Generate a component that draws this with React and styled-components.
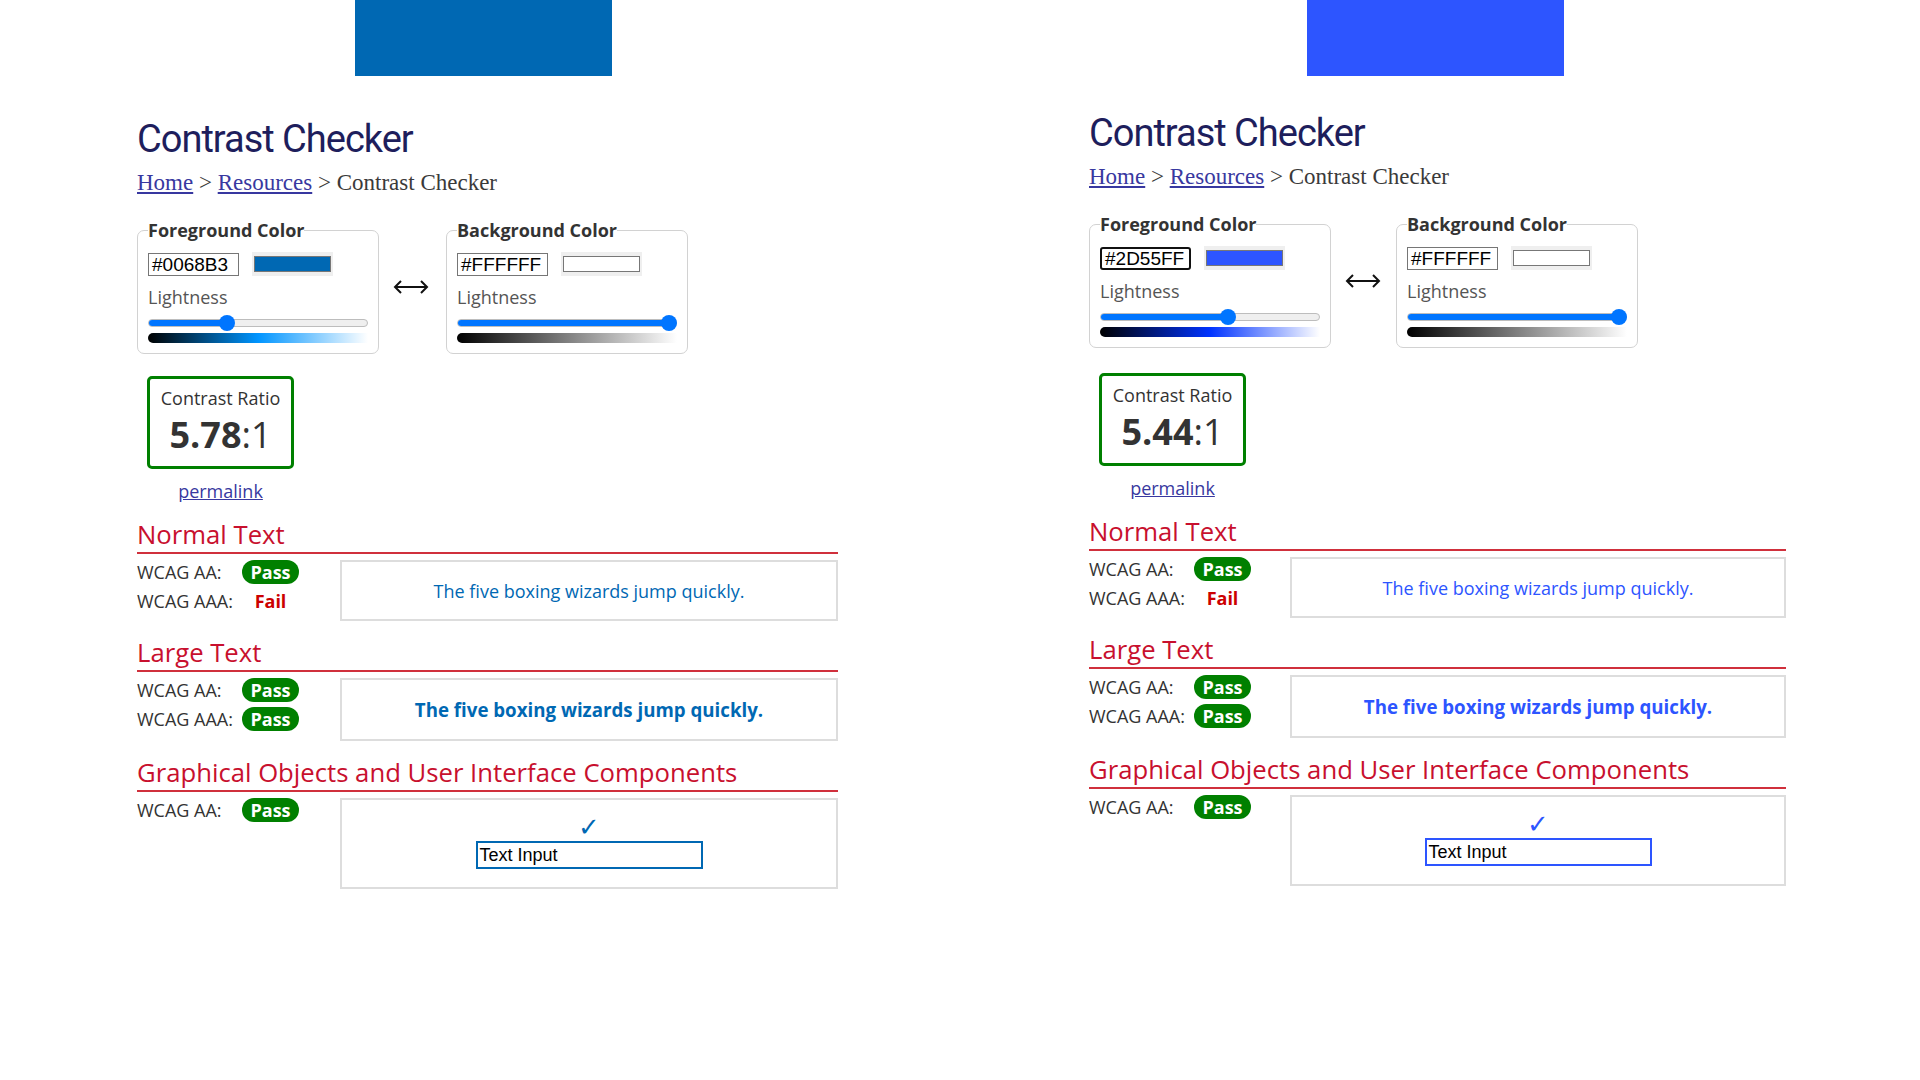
import React from 'react';
import styled, { createGlobalStyle } from 'styled-components';

const GlobalStyle = createGlobalStyle`
  body {
    margin: 0;
    background: #ffffff;
    font-family: "Open Sans", "Liberation Sans", sans-serif;
    color: #333333;
  }
`;

const Page = styled.div`
  display: flex;
  width: 1920px;
  height: 1080px;
  overflow: hidden;
  background: #ffffff;
`;

const Panel = styled.div`
  width: 952px;
  padding-left: 137px;
  box-sizing: border-box;
  display: flex;
  flex-direction: column;
  align-items: flex-start;
`;

const Preview = styled.div`
  width: 257px;
  height: 76px;
  margin-left: 218px;
  background: ${(p) => p.color};
`;

const Title = styled.h1`
  margin: ${(p) => p.gap}px 0 0;
  font-family: Roboto, "Liberation Sans", sans-serif;
  font-weight: 400;
  font-size: 38px;
  line-height: 44px;
  letter-spacing: -1px;
  color: #1e1e5c;
`;

const Crumbs = styled.div`
  margin-top: 8px;
  font-family: "Liberation Serif", serif;
  font-size: 23px;
  line-height: 28px;
  color: #3a3a3a;

  a {
    color: #3838a0;
    text-decoration: underline;
  }
`;

const PickerRow = styled.div`
  display: flex;
  align-items: center;
  margin-top: 23px;
`;

const Fieldset = styled.fieldset`
  width: 242px;
  box-sizing: border-box;
  margin: 0;
  padding: 0 10px 10px;
  border: 1px solid #d2d2d2;
  border-radius: 7px;
`;

const Legend = styled.legend`
  padding: 0;
  font-weight: 700;
  font-size: 18px;
  line-height: 20px;
  color: #333333;
`;

const ColorRow = styled.div`
  display: flex;
  align-items: center;
  gap: 13px;
  margin-top: 12px;
`;

const HexInput = styled.div`
  width: 91px;
  height: 23px;
  box-sizing: border-box;
  padding: 0 3px;
  border: ${(p) => (p.focused ? '2px solid #111111' : '1px solid #767676')};
  border-radius: ${(p) => (p.focused ? '3px' : '0')};
  font-family: "Liberation Sans", Arial, sans-serif;
  font-size: 19px;
  line-height: ${(p) => (p.focused ? '19px' : '21px')};
  color: #000000;
`;

const Swatch = styled.div`
  width: 81px;
  height: 24px;
  box-sizing: border-box;
  padding: 4px 2px;
  background: #efefef;
`;

const SwatchFill = styled.div`
  height: 100%;
  box-sizing: border-box;
  border: 1px solid #777777;
  background: ${(p) => p.color};
`;

const Label = styled.div`
  margin-top: 9px;
  font-size: 18px;
  line-height: 24px;
  color: #555555;
`;

const Slider = styled.div`
  position: relative;
  height: 16px;
  margin-top: 6px;
  display: flex;
  align-items: center;
`;

const Track = styled.div`
  flex: 1;
  height: 8px;
  box-sizing: border-box;
  border: 1px solid #bdbdbd;
  border-radius: 4px;
  background: #efefef;
  overflow: hidden;
`;

const TrackFill = styled.div`
  height: 100%;
  background: #0075ff;
`;

const Thumb = styled.div`
  position: absolute;
  top: 0;
  width: 16px;
  height: 16px;
  border-radius: 50%;
  background: #0075ff;
`;

const Gradient = styled.div`
  height: 10px;
  margin-top: 2px;
  border-radius: 5px 0 0 5px;
  background: linear-gradient(to right, #000000, ${(p) => p.mid}, #ffffff);
`;

const Swap = styled.div`
  display: flex;
  margin: 0 ${(p) => p.after}px 0 14px;
`;

const RatioBlock = styled.div`
  display: flex;
  flex-direction: column;
  align-items: center;
  margin: ${(p) => p.gap}px 0 0 10px;
`;

const RatioBox = styled.div`
  width: 147px;
  height: 93px;
  box-sizing: border-box;
  padding-top: 8px;
  border: 3px solid #008000;
  border-radius: 5px;
  text-align: center;
`;

const RatioCaption = styled.div`
  font-size: 18px;
  line-height: 22px;
  color: #333333;
`;

const RatioValue = styled.div`
  margin-top: 4px;
  font-size: 36px;
  line-height: 44px;
  color: #333333;

  b {
    font-weight: 700;
  }
`;

const Permalink = styled.a`
  margin-top: 10px;
  font-size: 18px;
  line-height: 24px;
  color: #3838a0;
  text-decoration: underline;
`;

const Section = styled.section`
  width: ${(p) => p.w}px;
`;

const SectionTitle = styled.h2`
  margin: 17px 0 6px;
  padding-bottom: 3px;
  font-weight: 400;
  font-size: 25.7px;
  line-height: 29px;
  color: #c8102e;
  border-bottom: 2px solid #d0303c;
`;

const SectionBody = styled.div`
  display: flex;
`;

const Results = styled.div`
  width: ${(p) => p.w}px;
  display: flex;
  flex-direction: column;
  gap: 5px;
`;

const ResultRow = styled.div`
  display: flex;
  align-items: center;
  height: 24px;
`;

const ResultLabel = styled.span`
  width: 105px;
  font-size: 18px;
  line-height: 24px;
  color: #333333;
`;

const Badge = styled.span`
  min-width: 57px;
  height: 24px;
  box-sizing: border-box;
  padding: 0 8px;
  border-radius: 12px;
  background: ${(p) => (p.fail ? 'transparent' : '#008000')};
  color: ${(p) => (p.fail ? '#cc0000' : '#ffffff')};
  font-weight: 700;
  font-size: 18px;
  line-height: 24px;
  text-align: center;
`;

const Sample = styled.div`
  flex: 1;
  height: ${(p) => p.h}px;
  box-sizing: border-box;
  border: 2px solid #dddddd;
  display: flex;
  flex-direction: column;
  align-items: center;
  justify-content: center;
  color: ${(p) => p.color};
  font-size: ${(p) => (p.large ? '18.7px' : '18px')};
  font-weight: ${(p) => (p.large ? 700 : 400)};
`;

const Check = styled.span`
  font-family: "DejaVu Sans", sans-serif;
  font-size: 26px;
  font-weight: 700;
  line-height: 24px;
  margin-top: -4px;
  color: ${(p) => p.color};
`;

const FakeInput = styled.div`
  width: 227px;
  height: 28px;
  box-sizing: border-box;
  margin-top: 2px;
  padding: 0 2px;
  border: 2px solid ${(p) => p.color};
  font-family: "Liberation Sans", Arial, sans-serif;
  font-size: 18px;
  line-height: 24px;
  color: #000000;
`;

const SwapArrow = () => (
  <svg width="36" height="14" viewBox="0 0 36 14" fill="none" stroke="#111" strokeWidth="2">
    <line x1="2" y1="7" x2="34" y2="7" />
    <polyline points="8,1 2,7 8,13" />
    <polyline points="28,1 34,7 28,13" />
  </svg>
);

const ColorPicker = ({ legend, hex, hue, sat, light, focused }) => (
  <Fieldset>
    <Legend>{legend}</Legend>
    <ColorRow>
      <HexInput focused={focused}>{hex}</HexInput>
      <Swatch>
        <SwatchFill color={hex} />
      </Swatch>
    </ColorRow>
    <Label>Lightness</Label>
    <Slider>
      <Track>
        <TrackFill style={{ width: `${light}%` }} />
      </Track>
      <Thumb style={{ left: `calc(${light / 100} * (100% - 16px))` }} />
    </Slider>
    <Gradient mid={`hsl(${hue}, ${sat}%, 50%)`} />
  </Fieldset>
);

const Result = ({ label, pass }) => (
  <ResultRow>
    <ResultLabel>{label}</ResultLabel>
    <Badge fail={!pass}>{pass ? 'Pass' : 'Fail'}</Badge>
  </ResultRow>
);

const Checker = ({ data }) => (
  <Panel>
    <Preview color={data.fg} />
    <Title gap={data.titleGap}>Contrast Checker</Title>
    <Crumbs>
      <a href="#">Home</a> &gt; <a href="#">Resources</a> &gt; Contrast Checker
    </Crumbs>
    <PickerRow>
      <ColorPicker legend="Foreground Color" hex={data.fg} hue={data.hue} sat={100} light={data.light} focused={data.focused} />
      <Swap after={data.swapAfter}>
        <SwapArrow />
      </Swap>
      <ColorPicker legend="Background Color" hex="#FFFFFF" hue={0} sat={0} light={100} />
    </PickerRow>
    <RatioBlock gap={data.ratioGap}>
      <RatioBox>
        <RatioCaption>Contrast Ratio</RatioCaption>
        <RatioValue>
          <b>{data.ratio}</b>:1
        </RatioValue>
      </RatioBox>
      <Permalink href="#">permalink</Permalink>
    </RatioBlock>

    <Section w={data.width}>
      <SectionTitle>Normal Text</SectionTitle>
      <SectionBody>
        <Results w={data.col}>
          <Result label="WCAG AA:" pass />
          <Result label="WCAG AAA:" pass={false} />
        </Results>
        <Sample h={61} color={data.fg}>The five boxing wizards jump quickly.</Sample>
      </SectionBody>
    </Section>

    <Section w={data.width}>
      <SectionTitle>Large Text</SectionTitle>
      <SectionBody>
        <Results w={data.col}>
          <Result label="WCAG AA:" pass />
          <Result label="WCAG AAA:" pass />
        </Results>
        <Sample h={63} large color={data.fg}>The five boxing wizards jump quickly.</Sample>
      </SectionBody>
    </Section>

    <Section w={data.width}>
      <SectionTitle>Graphical Objects and User Interface Components</SectionTitle>
      <SectionBody>
        <Results w={data.col}>
          <Result label="WCAG AA:" pass />
        </Results>
        <Sample h={91} color={data.fg}>
          <Check color={data.fg}>✓</Check>
          <FakeInput color={data.fg}>Text Input</FakeInput>
        </Sample>
      </SectionBody>
    </Section>
  </Panel>
);

const panels = [
  { fg: '#0068B3', hue: 205, light: 35, ratio: '5.78', focused: false, titleGap: 41, ratioGap: 22, swapAfter: 17, width: 701, col: 203 },
  { fg: '#2D55FF', hue: 228, light: 59, ratio: '5.44', focused: true, titleGap: 35, ratioGap: 25, swapAfter: 15, width: 697, col: 201 },
];

export default function App() {
  return (
    <>
      <GlobalStyle />
      <Page>
        {panels.map((p) => (
          <Checker key={p.fg} data={p} />
        ))}
      </Page>
    </>
  );
}
